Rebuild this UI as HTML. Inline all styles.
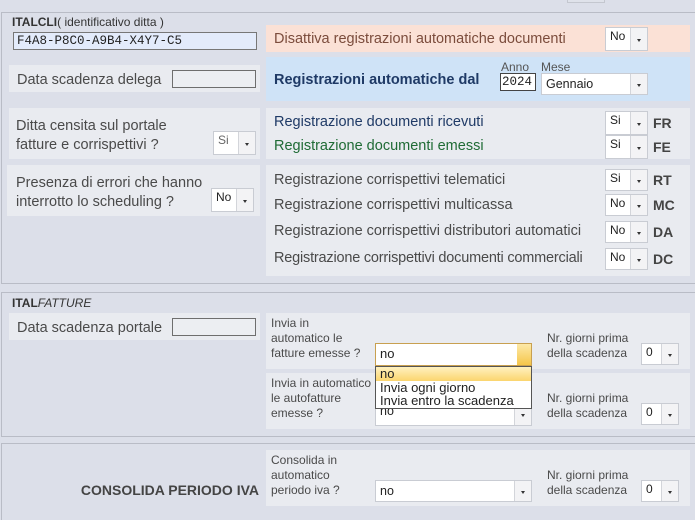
<!DOCTYPE html>
<html><head><meta charset="utf-8"><style>
*{box-sizing:border-box;margin:0;padding:0}
html,body{width:695px;height:520px;overflow:hidden}
body{background:#dcdfe9;position:relative;font-family:"Liberation Sans",sans-serif;color:#4a4a4a}
.a{position:absolute}
.box{position:absolute;border:1px solid #b9bcc6;border-right:none}
.p{position:absolute;background:#e9ebf0}
.t{position:absolute;font-size:14px;white-space:nowrap;line-height:16px}
.s{position:absolute;background:#fff;border:1px solid #c9ccd3;font-family:"Liberation Sans",sans-serif;font-size:12px;color:#222;padding:1px 0 0 4px;line-height:14px}
.s::after{content:"";position:absolute;right:0;top:0;bottom:0;width:16px;border-left:1px solid #d3d5da;background:#f3f3f5}
.s::before{content:"";position:absolute;right:6px;top:50%;width:0;height:0;border-left:2.5px solid transparent;border-right:2.5px solid transparent;border-top:3px solid #333;z-index:2}
.inp{position:absolute;background:#eceef2;border:1px solid #6e6e6e}
.c{position:absolute;font-size:14px;font-weight:bold;color:#444;white-space:nowrap}
.sm{font-size:12px;line-height:15px}
</style></head><body>
<div class="a" style="left:567px;top:-1px;width:38px;height:4px;border:1px solid #c4c7cf;background:#dfe2ea"></div>
<div class="box" style="left:1px;top:12px;width:700px;height:272px"></div>
<div class="box" style="left:1px;top:292px;width:700px;height:145px"></div>
<div class="box" style="left:1px;top:443px;width:700px;height:90px"></div>

<div class="t" style="left:12px;top:14px;font-size:12px;color:#333"><b>ITALCLI</b>( identificativo ditta )</div>
<div class="a" style="left:13px;top:32px;width:244px;height:18px;background:#e3ebfb;border:1px solid #777;font-family:'Liberation Mono',monospace;font-size:12.5px;color:#222;padding-left:3px;line-height:16px">F4A8-P8C0-A9B4-X4Y7-C5</div>

<div class="p" style="left:266px;top:25px;width:424px;height:27px;background:#fbe1d6"></div>
<div class="t" style="left:274px;top:31px;color:#7b4c3c;font-size:14.5px">Disattiva registrazioni automatiche documenti</div>
<div class="s" style="left:605px;top:27px;width:43px;height:24px">No</div>

<div class="p" style="left:9px;top:65px;width:251px;height:27px"></div>
<div class="t" style="left:17px;top:72px;font-size:14.5px">Data scadenza delega</div>
<div class="inp" style="left:172px;top:70px;width:84px;height:18px"></div>

<div class="p" style="left:266px;top:57px;width:424px;height:44px;background:#cfe3f7"></div>
<div class="t" style="left:274px;top:72px;font-weight:bold;color:#1f3a66;font-size:14.5px">Registrazioni automatiche dal</div>
<div class="t sm" style="left:501px;top:60px;color:#555">Anno</div>
<div class="t sm" style="left:541px;top:60px;color:#555">Mese</div>
<div class="a" style="left:500px;top:73px;width:36px;height:18px;background:#fff;border:1px solid #444;font-family:'Liberation Mono',monospace;font-size:12.5px;color:#222;padding-left:1px;line-height:16px">2024</div>
<div class="s" style="left:541px;top:73px;width:107px;height:22px;font-size:12.5px;padding-top:3px">Gennaio</div>

<div class="p" style="left:9px;top:108px;width:251px;height:51px"></div>
<div class="t" style="left:16px;top:117px;font-size:14.5px;line-height:19px">Ditta censita sul portale<br>fatture e corrispettivi ?</div>
<div class="s" style="left:213px;top:131px;width:43px;height:24px;color:#666">Si</div>

<div class="p" style="left:266px;top:108px;width:424px;height:51px"></div>
<div class="t" style="left:274px;top:114px;color:#1f3a66;font-size:14.5px">Registrazione documenti ricevuti</div>
<div class="t" style="left:274px;top:138px;color:#1f6b35;font-size:14.5px">Registrazione documenti emessi</div>
<div class="s" style="left:605px;top:111px;width:43px;height:24px">Si</div>
<div class="s" style="left:605px;top:135px;width:43px;height:24px">Si</div>
<div class="c" style="left:653px;top:115px">FR</div>
<div class="c" style="left:653px;top:139px">FE</div>

<div class="p" style="left:7px;top:165px;width:253px;height:51px"></div>
<div class="t" style="left:16px;top:174px;font-size:14.5px;line-height:19px">Presenza di errori che hanno<br>interrotto lo scheduling ?</div>
<div class="s" style="left:211px;top:188px;width:43px;height:24px">No</div>

<div class="p" style="left:266px;top:165px;width:424px;height:111px"></div>
<div class="t" style="left:274px;top:172px;font-size:14.5px">Registrazione corrispettivi telematici</div>
<div class="t" style="left:274px;top:197px;font-size:14.5px">Registrazione corrispettivi multicassa</div>
<div class="t" style="left:274px;top:223px;font-size:14.5px">Registrazione corrispettivi distributori automatici</div>
<div class="t" style="left:274px;top:250px;font-size:14.5px;letter-spacing:-0.2px">Registrazione corrispettivi documenti commerciali</div>
<div class="s" style="left:605px;top:169px;width:43px;height:22px">Si</div>
<div class="s" style="left:605px;top:194px;width:43px;height:22px">No</div>
<div class="s" style="left:605px;top:221px;width:43px;height:22px">No</div>
<div class="s" style="left:605px;top:248px;width:43px;height:22px">No</div>
<div class="c" style="left:653px;top:172px">RT</div>
<div class="c" style="left:653px;top:197px">MC</div>
<div class="c" style="left:653px;top:224px">DA</div>
<div class="c" style="left:653px;top:251px">DC</div>

<div class="t" style="left:12px;top:295px;font-size:12px;color:#333"><b>ITAL</b><i>FATTURE</i></div>
<div class="p" style="left:9px;top:313px;width:251px;height:27px"></div>
<div class="t" style="left:17px;top:320px;font-size:14.5px">Data scadenza portale</div>
<div class="inp" style="left:172px;top:318px;width:84px;height:18px"></div>

<div class="p" style="left:266px;top:313px;width:424px;height:56px"></div>
<div class="t sm" style="left:271px;top:316px">Invia in<br>automatico le<br>fatture emesse ?</div>
<div class="t sm" style="left:547px;top:331px">Nr. giorni prima<br>della scadenza</div>
<div class="s" style="left:641px;top:343px;width:38px;height:22px">0</div>

<div class="p" style="left:266px;top:373px;width:424px;height:56px"></div>
<div class="t sm" style="left:271px;top:376px">Invia in automatico<br>le autofatture<br>emesse ?</div>
<div class="t sm" style="left:547px;top:391px">Nr. giorni prima<br>della scadenza</div>
<div class="s" style="left:375px;top:402px;width:157px;height:24px;font-size:12.5px">no</div>
<div class="s" style="left:641px;top:403px;width:38px;height:22px">0</div>

<div class="c" style="left:59px;top:482px;width:200px;text-align:right;font-size:14px">CONSOLIDA PERIODO IVA</div>
<div class="p" style="left:266px;top:450px;width:424px;height:56px"></div>
<div class="t sm" style="left:271px;top:453px">Consolida in<br>automatico<br>periodo iva ?</div>
<div class="t sm" style="left:547px;top:468px">Nr. giorni prima<br>della scadenza</div>
<div class="s" style="left:375px;top:480px;width:157px;height:22px;font-size:12.5px;padding-top:3px">no</div>
<div class="s" style="left:641px;top:480px;width:38px;height:22px">0</div>

<div class="a" style="left:375px;top:343px;width:157px;height:23px;background:#fff;border:1px solid #c8a050;font-size:13px;color:#222;padding:2px 0 0 4px">no
<div class="a" style="right:0;top:0;bottom:0;width:14px;background:linear-gradient(#fde9a8,#f5c64a)"></div></div>
<div class="a" style="left:375px;top:366px;width:157px;height:43px;background:#fff;border:1px solid #555;font-size:13px;color:#222;line-height:13px">
<div style="background:linear-gradient(#fff1c0,#fbd56e);padding-left:4px;height:14px">no</div>
<div style="padding-left:4px">Invia ogni giorno</div>
<div style="padding-left:4px">Invia entro la scadenza</div>
</div>
</body></html>
